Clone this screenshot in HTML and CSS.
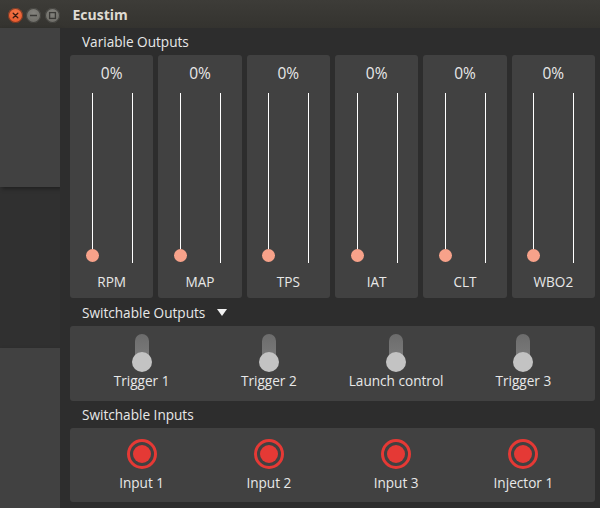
FILE: index.html
```html
<!DOCTYPE html>
<html>
<head>
<meta charset="utf-8">
<link rel="stylesheet" href="styles.css">
</head>
<body>
<div class="window">
  <header class="titlebar">
    <div class="wbtns">
      <span class="wbtn close"><svg width="15" height="15" viewBox="0 0 15 15"><path d="M5.2 5.2 L9.8 9.8 M9.8 5.2 L5.2 9.8" stroke="#3a1a10" stroke-width="1.3" stroke-linecap="round"/></svg></span>
      <span class="wbtn"><svg width="15" height="15" viewBox="0 0 15 15"><path d="M4 7.5 H11" stroke="#3a3936" stroke-width="1.5"/></svg></span>
      <span class="wbtn"><svg width="15" height="15" viewBox="0 0 15 15"><rect x="4.6" y="4.6" width="5.8" height="5.8" fill="none" stroke="#3a3936" stroke-width="1.3"/></svg></span>
    </div>
    <span class="title">Ecustim</span>
  </header>
  <div class="content">
    <aside class="side">
      <div class="side-panel top"></div>
      <div class="side-panel bottom"></div>
    </aside>
    <main class="main">
      <h2 class="group-title">Variable Outputs</h2>
      <div class="sliders">
        <div class="scard"><div class="pct">0%</div><div class="slider"><div class="track"><div class="line"></div><div class="knob"></div></div><div class="line rline"></div></div><div class="slabel">RPM</div></div>
        <div class="scard"><div class="pct">0%</div><div class="slider"><div class="track"><div class="line"></div><div class="knob"></div></div><div class="line rline"></div></div><div class="slabel">MAP</div></div>
        <div class="scard"><div class="pct">0%</div><div class="slider"><div class="track"><div class="line"></div><div class="knob"></div></div><div class="line rline"></div></div><div class="slabel">TPS</div></div>
        <div class="scard"><div class="pct">0%</div><div class="slider"><div class="track"><div class="line"></div><div class="knob"></div></div><div class="line rline"></div></div><div class="slabel">IAT</div></div>
        <div class="scard"><div class="pct">0%</div><div class="slider"><div class="track"><div class="line"></div><div class="knob"></div></div><div class="line rline"></div></div><div class="slabel">CLT</div></div>
        <div class="scard"><div class="pct">0%</div><div class="slider"><div class="track"><div class="line"></div><div class="knob"></div></div><div class="line rline"></div></div><div class="slabel">WBO2</div></div>
      </div>
      <h2 class="group-title">Switchable Outputs <span class="tri"></span></h2>
      <div class="card switches">
        <div class="item"><div class="toggle"><div class="ttrack"></div><div class="tknob"></div></div><div class="ilabel">Trigger 1</div></div>
        <div class="item"><div class="toggle"><div class="ttrack"></div><div class="tknob"></div></div><div class="ilabel">Trigger 2</div></div>
        <div class="item"><div class="toggle"><div class="ttrack"></div><div class="tknob"></div></div><div class="ilabel">Launch control</div></div>
        <div class="item"><div class="toggle"><div class="ttrack"></div><div class="tknob"></div></div><div class="ilabel">Trigger 3</div></div>
      </div>
      <h2 class="group-title">Switchable Inputs</h2>
      <div class="card inputs">
        <div class="item"><div class="radio"><div class="dot"></div></div><div class="ilabel">Input 1</div></div>
        <div class="item"><div class="radio"><div class="dot"></div></div><div class="ilabel">Input 2</div></div>
        <div class="item"><div class="radio"><div class="dot"></div></div><div class="ilabel">Input 3</div></div>
        <div class="item"><div class="radio"><div class="dot"></div></div><div class="ilabel">Injector 1</div></div>
      </div>
    </main>
  </div>
</div>
</body>
</html>
```

FILE: styles.css
```css
* { box-sizing: border-box; }
html, body { margin: 0; padding: 0; }
body {
  width: 600px;
  height: 508px;
  overflow: hidden;
  background: #2e2e2e;
  font-family: "Open Sans", "Noto Sans", sans-serif;
  color: #e8e8e8;
}
.window { width: 600px; height: 508px; display: flex; flex-direction: column; }
.titlebar {
  height: 28px;
  flex: none;
  display: flex;
  align-items: center;
  background: linear-gradient(#3d3c38, #34332f);
}
.wbtns { display: flex; align-items: center; gap: 3.5px; padding-left: 7.5px; margin-top: 2px; }
.wbtn {
  width: 15px; height: 15px; border-radius: 50%;
  background: radial-gradient(circle at 50% 35%, #84837e, #66655f);
  display: flex; align-items: center; justify-content: center;
  box-shadow: inset 0 0 0 1px rgba(30,29,27,0.55);
}
.wbtn svg { display: block; }
.wbtn.close {
  background: radial-gradient(circle at 50% 35%, #f7794a, #e24d22);
}
.title {
  margin-left: 13px;
  font-weight: bold;
  font-size: 14px;
  color: #dfdbd2;
  margin-top: 1px;
}
.content { flex: 1; display: flex; min-height: 0; }
.side {
  width: 60px; flex: none;
  display: flex; flex-direction: column; justify-content: space-between;
  background: #303030;
}
.side-panel { background: #414141; box-shadow: 2px 2px 4px rgba(0,0,0,0.35); }
.side-panel.top { height: 159px; }
.side-panel.bottom { height: 160px; }
.main {
  flex: 1;
  padding: 0 5px 6px 10px;
  display: flex; flex-direction: column;
  background: #2d2d2d;
}
.group-title {
  margin: 0;
  height: 27px;
  line-height: 27px;
  font-size: 13.6px;
  font-weight: normal;
  padding-left: 12px;
  display: flex; align-items: center;
}
.group-title:nth-of-type(2) { height: 28px; }
.tri {
  width: 0; height: 0; margin-left: 12px; margin-top: 0;
  border-left: 5.5px solid transparent; border-right: 5.5px solid transparent;
  border-top: 7.5px solid #f2f2f2;
}
.sliders { display: grid; grid-template-columns: repeat(6, 1fr); gap: 5px; height: 243px; }
.scard {
  background: #414141; border-radius: 3px;
  display: flex; flex-direction: column; align-items: center;
  padding-top: 8px;
}
.pct { font-size: 15.5px; line-height: 20px; height: 20px; }
.slider {
  margin-top: 10px; height: 170px; width: 41px;
  display: flex; justify-content: space-between;
  margin-left: 1px;
}
.track {
  width: 13px; margin-left: -6px;
  display: flex; flex-direction: column; align-items: center;
  padding-bottom: 1px;
}
.line { width: 1px; background: #ffffff; }
.track .line { flex: 1; }
.knob { width: 13px; height: 13px; border-radius: 50%; background: #f7a28a; flex: none; }
.slabel { margin-top: 10px; font-size: 13.6px; line-height: 18px; }
.card { background: #414141; border-radius: 3px; }
.switches {
  display: grid; grid-template-columns: repeat(4, 1fr);
  padding: 8px 8px 11px; height: 75px;
}
.inputs {
  display: grid; grid-template-columns: repeat(4, 1fr);
  padding: 11px 8px 10px; height: 74px;
}
.item { display: flex; flex-direction: column; align-items: center; }
.ilabel { font-size: 13.6px; line-height: 18px; white-space: nowrap; }
.toggle { height: 38px; width: 20px; display: flex; flex-direction: column; align-items: center; }
.ttrack {
  width: 14px; height: 28px; border-radius: 7px 7px 0 0;
  background: linear-gradient(#6c6c6c, #7d7d7d);
}
.tknob {
  width: 20px; height: 20px; border-radius: 50%;
  background: #c3c3c3; margin-top: -10px;
}
.radio {
  width: 30px; height: 30px; border-radius: 50%;
  border: 3px solid #e53935;
  display: flex; align-items: center; justify-content: center;
}
.dot { width: 18px; height: 18px; border-radius: 50%; background: #e53935; }
.inputs .ilabel { margin-top: 5px; }
```
